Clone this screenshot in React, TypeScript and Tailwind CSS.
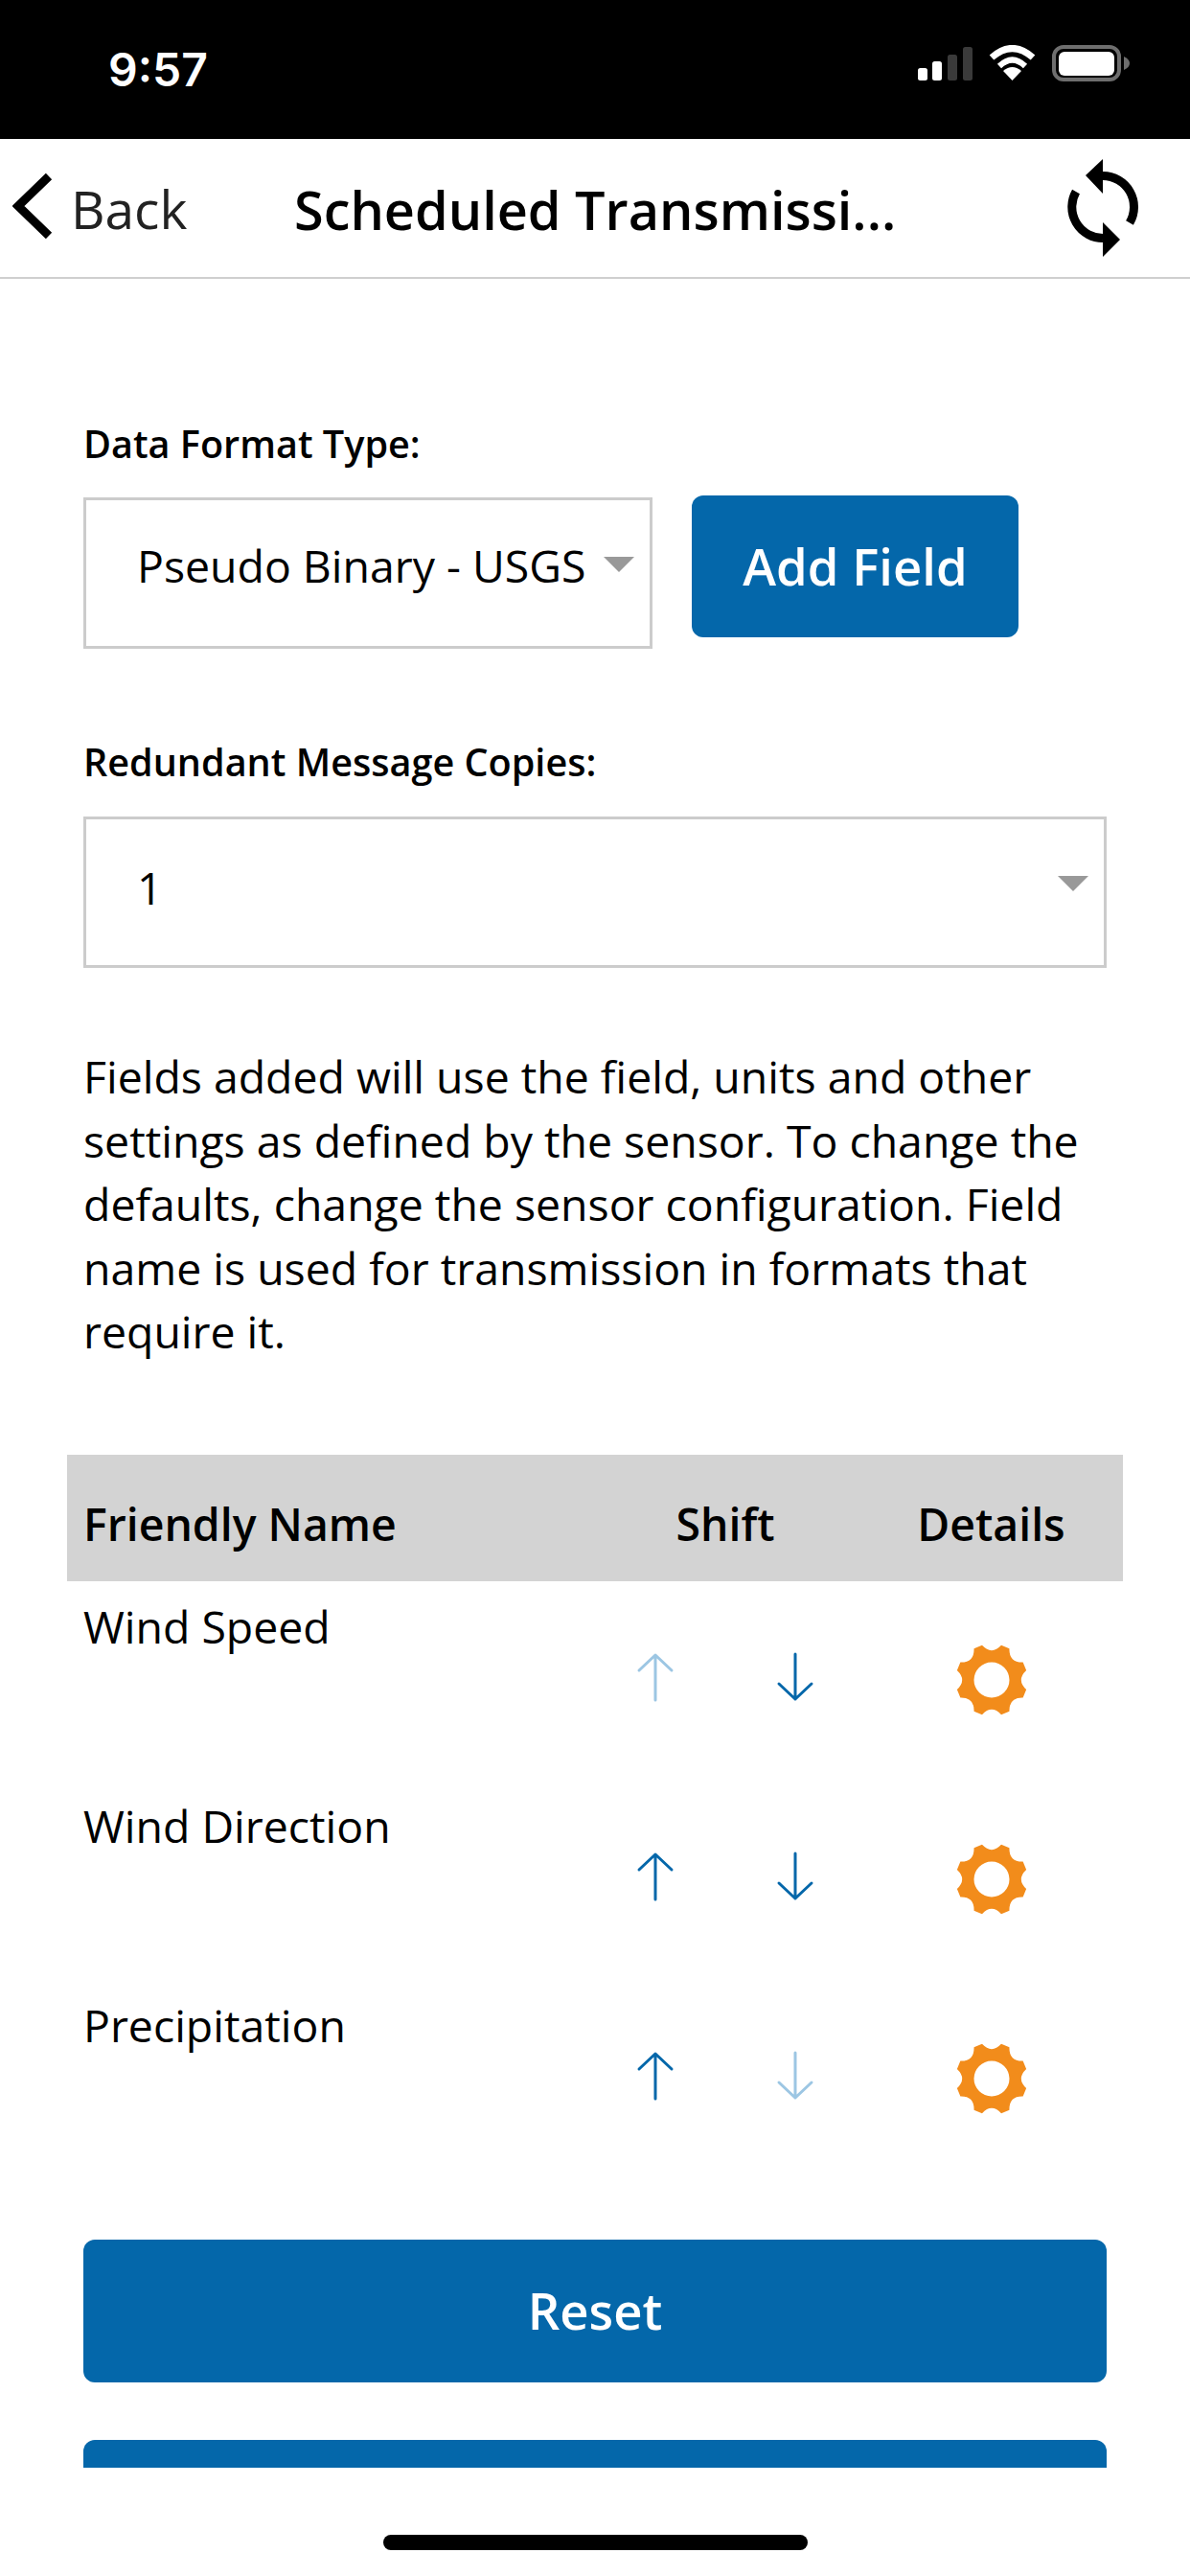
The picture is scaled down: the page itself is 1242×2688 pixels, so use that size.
import React from "react";

const polar = (r: number, deg: number) => {
  const a = (deg * Math.PI) / 180;
  return `${(r * Math.sin(a)).toFixed(2)} ${(-r * Math.cos(a)).toFixed(2)}`;
};

const gearOutline = () => {
  let d = `M${polar(37.5, 15.5)}`;
  for (let i = 0; i < 8; i++) {
    const t = 22.5 + 45 * i;
    d += ` L${polar(37.5, t + 7)} Q${polar(25.5, t + 22.5)} ${polar(37.5, t + 38)}`;
  }
  return d + " Z";
};

const Gear = () => (
  <svg width="74" height="74" viewBox="-37 -37 74 74" className="block">
    <path
      fillRule="evenodd"
      fill="#f28c1b"
      d={`${gearOutline()} M-18.5 0 A18.5 18.5 0 1 0 18.5 0 A18.5 18.5 0 1 0 -18.5 0 Z`}
    />
  </svg>
);

const Arrow = ({ down, faded }: { down?: boolean; faded?: boolean }) => (
  <svg width="40" height="52" viewBox="0 0 40 52" className="block">
    <path
      d={down ? "M20 2 V49 M3 33 L20 49 L37 33" : "M20 50 V3 M3 19 L20 3 L37 19"}
      fill="none"
      stroke={faded ? "#9cc6e3" : "#0467aa"}
      strokeWidth="3"
      strokeLinecap="round"
      strokeLinejoin="round"
    />
  </svg>
);

const Caret = () => (
  <svg width="32" height="16" viewBox="0 0 32 16" className="block">
    <path d="M0 0 H32 L16 16 Z" fill="#999999" />
  </svg>
);

const rows = [
  { name: "Wind Speed", upFaded: true, downFaded: false },
  { name: "Wind Direction", upFaded: false, downFaded: false },
  { name: "Precipitation", upFaded: false, downFaded: true },
];

export default function App() {
  return (
    <div className="flex h-[2688px] w-[1242px] flex-col overflow-hidden bg-white font-['Open_Sans',sans-serif] text-black">
      <div className="flex h-[145px] shrink-0 items-start justify-between bg-black pl-[113px] pr-[63px] text-white">
        <span className="mt-[43px] font-['Inter',sans-serif] text-[48px] leading-[60px] font-semibold">9:57</span>
        <div className="mt-[47px] flex items-center gap-[17px]">
          <svg width="57" height="36" viewBox="0 0 57 36" className="block">
            <rect x="0" y="23" width="10" height="13" rx="2.5" fill="#fff" />
            <rect x="15" y="16" width="10" height="20" rx="2.5" fill="#fff" />
            <rect x="31" y="9" width="10" height="27" rx="2.5" fill="#3a3a3a" />
            <rect x="47" y="1" width="10" height="35" rx="2.5" fill="#3a3a3a" />
          </svg>
          <svg width="49" height="38" viewBox="0 0 49 38" className="block">
            <path d="M3 13 Q24.5 -6 46 13" fill="none" stroke="#fff" strokeWidth="7" />
            <path d="M11 22 Q24.5 9 38 22" fill="none" stroke="#fff" strokeWidth="6" />
            <path d="M24.5 37 L15 27 Q24.5 19 34 27 Z" fill="#fff" />
          </svg>
          <svg width="81" height="38" viewBox="0 0 81 38" className="block">
            <rect x="2" y="2" width="68" height="34" rx="10" fill="none" stroke="#6e6e6e" strokeWidth="4" />
            <rect x="7" y="7" width="58" height="25" rx="6" fill="#fff" />
            <path d="M75 12 C79 14 81 16 81 19 C81 22 79 24 75 26 Z" fill="#6e6e6e" />
          </svg>
        </div>
      </div>

      <div className="flex h-[146px] shrink-0 items-center border-b-2 border-[#cfcfcf] pr-[54px] pl-[13px]">
        <svg width="42" height="69" viewBox="13 180 42 69" className="-mt-[5px] block shrink-0">
          <path d="M51 184 L19 215 L51 246" fill="none" stroke="#000" strokeWidth="9" />
        </svg>
        <span className="mt-[2px] ml-[19px] w-[233px] text-[55px] leading-[72px] text-[#222222]">Back</span>
        <span className="mt-[2px] flex-1 text-[55.8px] leading-[72px] font-semibold">Scheduled Transmissi...</span>
        <svg width="74" height="102" viewBox="24 16 74 102" className="block shrink-0">
          <path d="M61 33.5 A32.5 32.5 0 0 1 89 82.5" fill="none" stroke="#000" strokeWidth="9" />
          <path d="M61 16 L43 33 L61 52 Z" fill="#000" />
          <path d="M33 50 A32.5 32.5 0 0 0 61 98.5" fill="none" stroke="#000" strokeWidth="9" />
          <path d="M61 82 L79 100 L61 118 Z" fill="#000" />
        </svg>
      </div>

      <div className="h-[2284px] shrink-0 overflow-hidden">
        <div className="px-[87px] pt-[150px]">
          <div className="text-[39.6px] leading-[44px] font-semibold">Data Format Type:</div>
          <div className="mt-[32px] flex items-start gap-[41px]">
            <div className="relative mt-[2px] flex h-[158px] w-[594px] items-center border-[3px] border-[#cccccc] pl-[53px]">
              <span className="-mt-[17px] text-[46.4px] leading-[60px] whitespace-nowrap">Pseudo Binary - USGS</span>
              <div className="absolute top-[59px] right-[16px]"><Caret /></div>
            </div>
            <div className="flex h-[148px] w-[341px] items-center justify-center rounded-[12px] bg-[#0467aa] text-[52.6px] font-semibold text-white">Add Field</div>
          </div>

          <div className="mt-[96px] text-[39.6px] leading-[44px] font-semibold">Redundant Message Copies:</div>
          <div className="relative mt-[35px] flex h-[158px] w-[1068px] items-center border-[3px] border-[#cccccc] pl-[53px]">
            <span className="-mt-[10px] text-[46.4px] leading-[60px]">1</span>
            <div className="absolute top-[59px] right-[16px]"><Caret /></div>
          </div>

          <p className="mt-[80px] text-[46.4px] leading-[66.5px]">
            Fields added will use the field, units and other<br />
            settings as defined by the sensor. To change the<br />
            defaults, change the sensor configuration. Field<br />
            name is used for transmission in formats that<br />
            require it.
          </p>
        </div>

        <div className="mx-[70px] mt-[95px] flex h-[132px] items-center bg-[#d3d3d3] pt-[14px] pl-[17px] text-[46.4px] font-semibold">
          <span className="w-[530px]">Friendly Name</span>
          <span className="w-[280px] text-center">Shift</span>
          <span className="flex-1 text-center">Details</span>
        </div>

        <div className="mx-[70px]">
          {rows.map((r) => (
            <div key={r.name} className="flex h-[208px] items-start pl-[17px]">
              <span className="mt-[17px] w-[530px] text-[46.4px] leading-[60px]">{r.name}</span>
              <div className="mt-[74px] flex w-[280px] justify-center gap-[106px]">
                <Arrow faded={r.upFaded} />
                <Arrow down faded={r.downFaded} />
              </div>
              <div className="mt-[66px] flex flex-1 justify-center">
                <Gear />
              </div>
            </div>
          ))}
        </div>

        <div className="px-[87px] pt-[63px]">
          <div className="flex h-[149px] items-center justify-center rounded-[12px] bg-[#0467aa] text-[52.6px] font-semibold text-white">Reset</div>
          <div className="mt-[60px] h-[149px] rounded-[12px] bg-[#0467aa]"></div>
        </div>
      </div>

      <div className="flex flex-1 justify-center pt-[70px]">
        <div className="h-[16px] w-[443px] rounded-full bg-black"></div>
      </div>
    </div>
  );
}
